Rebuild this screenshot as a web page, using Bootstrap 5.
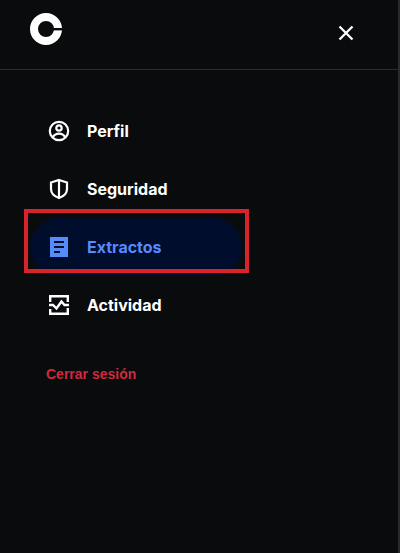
<!DOCTYPE html>
<html lang="es" data-bs-theme="dark">
<head>
<meta charset="utf-8">
<meta name="viewport" content="width=device-width, initial-scale=1">
<title>Menú de cuenta</title>
<link href="https://cdn.jsdelivr.net/npm/bootstrap@5.3.0/dist/css/bootstrap.min.css" rel="stylesheet">
<style>
body { background: #090b0d; font-family: Inter, "Liberation Sans", sans-serif; }
.panel { border-right: 2px solid #2b2a29; }
.panel-head { height: 70px; border-bottom: 1px solid #292b2d; padding: 0 40px 4px 30px; }
.brand { margin-bottom: 8px; }
.close-btn { width: 24px; height: 24px; line-height: 0; }
.menu { padding: 32px 0 0 30px; }
.menu-item { width: 212px; height: 58px; padding: 0 17px; gap: 16px; border-radius: 29px; color: #fff; font-size: 16px; line-height: 24px; font-weight: 700; text-decoration: none; }
.menu-item.current { background: #010d2d; color: #578bfa; }
.highlight { position: absolute; inset: -9px -7px 3px -6px; border: 4px solid #d7242b; pointer-events: none; }
.logout { margin: 30px 0 0 46px; color: #cf2a3d; font: 700 14px/20px "Liberation Sans", sans-serif; }
</style>
<script defer src="https://cdn.jsdelivr.net/npm/bootstrap@5.3.0/dist/js/bootstrap.bundle.min.js"></script>
</head>
<body>
<div class="panel min-vh-100">
  <header class="panel-head d-flex align-items-center justify-content-between">
    <a href="#" class="brand d-flex" aria-label="Inicio">
      <svg width="32" height="32" viewBox="0 0 32 32" aria-hidden="true"><circle cx="16" cy="16" r="12" fill="none" stroke="#fff" stroke-width="8"/><path d="M23 15H32V17.4H23Z" fill="#090b0d"/></svg>
    </a>
    <button type="button" class="close-btn btn p-0 border-0" aria-label="Cerrar">
      <svg width="24" height="24" viewBox="0 0 24 24" fill="none" stroke="#fff" stroke-width="2.3" aria-hidden="true"><path d="M5.5 5.5 18.5 18.5M18.5 5.5 5.5 18.5"/></svg>
    </button>
  </header>
  <nav class="menu d-flex flex-column align-items-start" aria-label="Cuenta">
    <a href="#" class="menu-item d-flex align-items-center">
      <svg width="24" height="24" viewBox="0 0 24 24" fill="none" stroke="#fff" stroke-width="2.2" aria-hidden="true"><circle cx="12" cy="12" r="9.2"/><circle cx="12" cy="9" r="2.7"/><path d="M5.8 18.5C7 15.8 9 14.6 12 14.6S17 15.8 18.2 18.5"/></svg>
      <span>Perfil</span>
    </a>
    <a href="#" class="menu-item d-flex align-items-center">
      <svg width="24" height="24" viewBox="0 0 24 24" fill="none" stroke="#fff" stroke-width="2.2" aria-hidden="true"><path d="M12 3 20 5.5V12C20 16.5 17 19.2 12 21 7 19.2 4 16.5 4 12V5.5ZM12 3V21"/></svg>
      <span>Seguridad</span>
    </a>
    <div class="position-relative">
      <a href="#" class="menu-item current d-flex align-items-center" aria-current="page">
        <svg width="24" height="24" viewBox="0 0 24 24" aria-hidden="true"><path fill="#578bfa" d="M3 2H21V22H3Z"/><path stroke="#010d2d" stroke-width="2" d="M7 7H17M7 12H17M7 17H13"/></svg>
        <span>Extractos</span>
      </a>
      <span class="highlight" aria-hidden="true"></span>
    </div>
    <a href="#" class="menu-item d-flex align-items-center">
      <svg width="24" height="24" viewBox="0 0 24 24" fill="none" stroke="#fff" stroke-width="2.4" aria-hidden="true"><path d="M3.2 9V3.2H20.8V9M3.2 16V20.8H20.8V15M2 12H6L9.5 15.5 14.5 8.5 17.5 12H22"/></svg>
      <span>Actividad</span>
    </a>
  </nav>
  <button type="button" class="logout btn p-0 border-0">Cerrar sesión</button>
</div>
</body>
</html>
